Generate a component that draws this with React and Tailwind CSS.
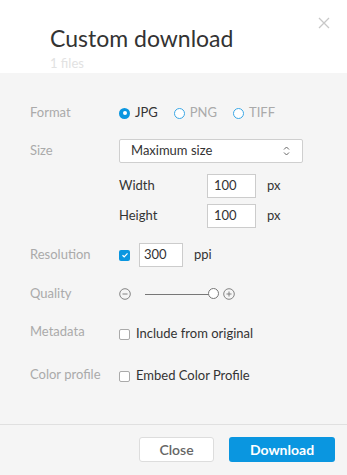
import React from 'react';

function Radio({ checked, label }) {
  return (
    <label className="flex items-center gap-[5px]">
      {checked ? (
        <span className="w-[11px] h-[11px] rounded-full bg-[#0a96e0] flex items-center justify-center">
          <span className="w-[4px] h-[4px] rounded-full bg-white"></span>
        </span>
      ) : (
        <span className="w-[11px] h-[11px] rounded-full border border-[#3aa7e6] bg-white"></span>
      )}
      <span className={checked ? 'text-[#333]' : 'text-[#aaa]'}>{label}</span>
    </label>
  );
}

function Box({ checked }) {
  return checked ? (
    <span className="w-[11px] h-[11px] rounded-[2px] bg-[#0a96e0] flex items-center justify-center">
      <svg width="8" height="8" viewBox="0 0 8 8">
        <path d="M1.5 4.2 L3.2 5.8 L6.5 2.3" fill="none" stroke="white" strokeWidth="1.2" />
      </svg>
    </span>
  ) : (
    <span className="w-[11px] h-[11px] rounded-[2px] border border-[#aaa] bg-white"></span>
  );
}

export default function App() {
  const label = 'w-[89px] shrink-0 text-[#aaa]';
  return (
    <div className="w-[347px] h-[475px] bg-[#f5f5f5] flex flex-col text-[13px] font-['Lato','Liberation_Sans',sans-serif] relative">
      <button className="absolute left-[318px] top-[17px] text-[#ccc]">
        <svg width="12" height="12" viewBox="0 0 12 12">
          <path d="M1 1 L11 11 M11 1 L1 11" stroke="#c8c8c8" strokeWidth="1.3" />
        </svg>
      </button>

      <div className="bg-white h-[73px] pl-[50px] pt-[24px]">
        <h2 className="text-[23px] leading-[28px] text-[#333]">Custom download</h2>
        <div className="text-[13px] leading-[16px] text-[#e2e2e2] mt-[3px]">1 files</div>
      </div>

      <div className="flex-1 pl-[30px] pt-[30px]">
        <div className="flex items-center h-[20px]">
          <div className={label}>Format</div>
          <div className="flex items-center gap-[16px]">
            <Radio checked label="JPG" />
            <Radio label="PNG" />
            <Radio label="TIFF" />
          </div>
        </div>

        <div className="flex items-center mt-[16px]">
          <div className={label}>Size</div>
          <div className="w-[184px] h-[24px] border border-[#cfcfcf] rounded-[2px] bg-white flex items-center justify-between pl-[11px] pr-[12px] text-[#333]">
            <span>Maximum size</span>
            <svg width="7" height="10" viewBox="0 0 7 10">
              <path d="M1 3.5 L3.5 1 L6 3.5 M1 6.5 L3.5 9 L6 6.5" fill="none" stroke="#666" strokeWidth="1" />
            </svg>
          </div>
        </div>

        <div className="flex items-center mt-[11px] pl-[89px] text-[#333]">
          <div className="w-[88px]">Width</div>
          <div className="w-[49px] h-[24px] border border-[#ccc] bg-white flex items-center pl-[6px]">100</div>
          <span className="ml-[11px]">px</span>
        </div>
        <div className="flex items-center mt-[6px] pl-[89px] text-[#333]">
          <div className="w-[88px]">Height</div>
          <div className="w-[49px] h-[24px] border border-[#ccc] bg-white flex items-center pl-[6px]">100</div>
          <span className="ml-[11px]">px</span>
        </div>

        <div className="flex items-center mt-[15px]">
          <div className={label}>Resolution</div>
          <Box checked />
          <div className="ml-[9px] w-[44px] h-[24px] border border-[#ccc] bg-white flex items-center pl-[4px] text-[#333]">300</div>
          <span className="ml-[11px] text-[#333]">ppi</span>
        </div>

        <div className="flex items-center mt-[17px] h-[20px]">
          <div className={label}>Quality</div>
          <svg width="12" height="12" viewBox="0 0 12 12">
            <circle cx="6" cy="6" r="5.3" fill="none" stroke="#777" strokeWidth="0.9" />
            <path d="M3.5 6 H8.5" stroke="#777" strokeWidth="0.9" />
          </svg>
          <div className="relative ml-[14px] w-[72px] h-[12px] flex items-center">
            <div className="w-full h-[1px] bg-[#777]"></div>
            <div className="absolute right-[-2px] top-[0px] w-[11px] h-[11px] rounded-full border border-[#777] bg-white"></div>
          </div>
          <svg className="ml-[6px]" width="12" height="12" viewBox="0 0 12 12">
            <circle cx="6" cy="6" r="5.3" fill="none" stroke="#777" strokeWidth="0.9" />
            <path d="M3.5 6 H8.5 M6 3.5 V8.5" stroke="#777" strokeWidth="0.9" />
          </svg>
        </div>

        <div className="flex items-center mt-[20px] h-[20px]">
          <div className={`${label} -mt-[4px]`}>Metadata</div>
          <Box />
          <span className="ml-[6px] text-[#333]">Include from original</span>
        </div>

        <div className="flex items-center mt-[22px] h-[20px]">
          <div className={`${label} -mt-[2px]`}>Color profile</div>
          <Box />
          <span className="ml-[6px] text-[#333]">Embed Color Profile</span>
        </div>
      </div>

      <div className="border-t border-[#e0e0e0] h-[51px] flex items-center justify-end gap-[15px] pr-[12px] pb-[1px]">
        <button className="w-[75px] h-[25px] bg-white border border-[#ddd] rounded-[3px] text-[#666] text-[14px] font-semibold">Close</button>
        <button className="w-[106px] h-[25px] bg-[#0a96e0] rounded-[3px] text-white text-[14px] font-bold">Download</button>
      </div>
    </div>
  );
}
